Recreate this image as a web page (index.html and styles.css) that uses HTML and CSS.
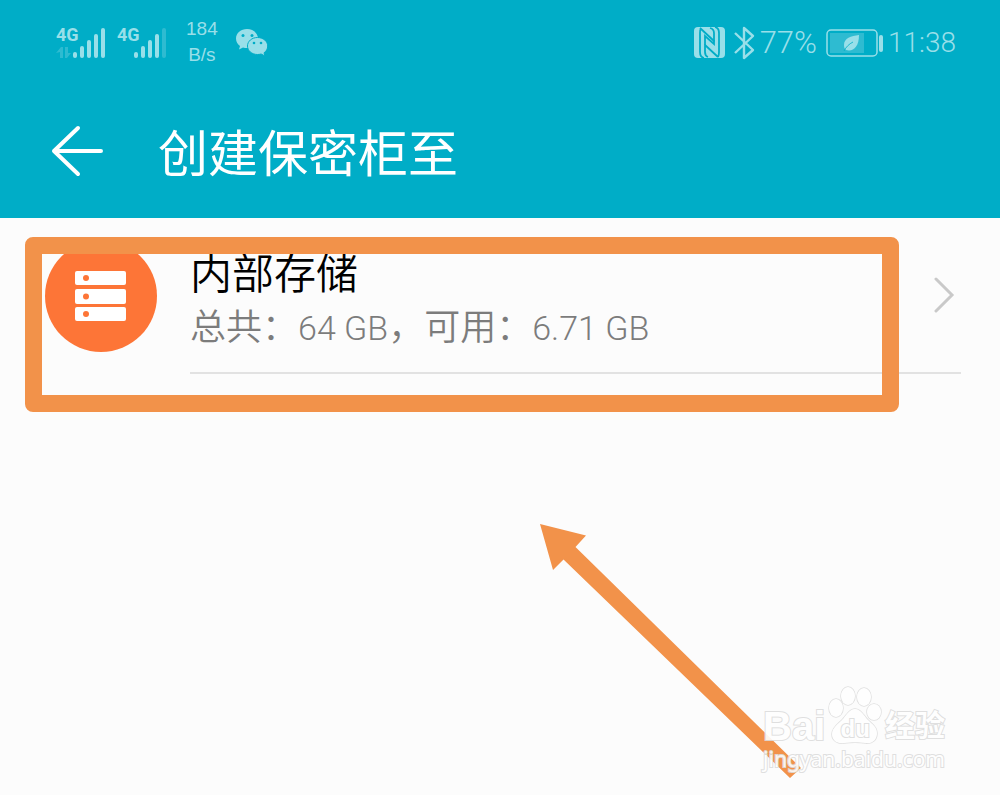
FILE: index.html
```html
<!DOCTYPE html>
<html lang="zh-CN">
<head>
    <meta charset="UTF-8">
    <meta name="viewport" content="width=device-width, initial-scale=1.0">
    <title>创建保密柜至</title>
    <link rel="stylesheet" href="styles.css">
</head>
<body>
    <header class="header">
        <div class="status-bar">
            <div class="status-left">
                <div class="signal">
                    <span class="net">4G</span>
                    <svg width="50" height="34" viewBox="0 0 50 34" fill="currentColor">
                        <path opacity=".3" d="M0 28l5-6h2v11H4v-6zM9 22h3v6h3l-4 5H9z"/>
                        <rect x="17" y="27" width="4" height="6" rx="2"/>
                        <rect x="24" y="21" width="4" height="12" rx="2"/>
                        <rect x="31" y="15" width="4" height="18" rx="2"/>
                        <rect x="38" y="9" width="4" height="24" rx="2"/>
                        <rect x="45" y="3" width="4" height="30" rx="2"/>
                    </svg>
                </div>
                <div class="signal">
                    <span class="net">4G</span>
                    <svg width="50" height="34" viewBox="0 0 50 34" fill="currentColor">
                        <rect x="17" y="27" width="4" height="6" rx="2"/>
                        <rect x="24" y="21" width="4" height="12" rx="2"/>
                        <rect x="31" y="15" width="4" height="18" rx="2"/>
                        <rect x="38" y="9" width="4" height="24" rx="2"/>
                        <rect x="45" y="3" width="4" height="30" rx="2" opacity=".3"/>
                    </svg>
                </div>
                <div class="speed"><span>184</span><span>B/s</span></div>
                <svg width="32" height="28" viewBox="0 0 32 28">
                    <path fill="currentColor" d="M11 1C5 1 0 5 0 10.500c0 3 1.500 5.500 4 7.500l-1 3.500 4-2c1.300.4 2.700.6 4 .6 6 0 11-4.300 11-9.600S17 1 11 1z"/>
                    <path fill="currentColor" stroke="#00adc7" stroke-width="1" d="M21.500 9.500c-5.600 0-10 3.700-10 8.500s4.400 8.500 10 8.500c1.300 0 2.500-.2 3.600-.5l3.900 2-1-3.200c2.400-1.600 3.700-4 3.700-6.800 0-4.800-4.600-8.500-10.200-8.500z"/>
                    <g fill="#00adc7"><circle cx="7" cy="7.500" r="1.500"/><circle cx="16" cy="7.500" r="1.500"/><circle cx="18" cy="15" r="1.300"/><circle cx="25" cy="15" r="1.300"/></g>
                </svg>
            </div>
            <div class="status-right">
                <svg width="31" height="32" viewBox="0 0 31 32">
                    <rect width="31" height="31" rx="4" fill="currentColor"/>
                    <path fill="none" stroke="#00adc7" stroke-width="1.800" stroke-linejoin="round" d="M7 1Q6 3 6 6V25Q6 30 10 31M6 1L20 14V6Q20 2 16 1M24 30Q25 28 25 25V6Q25 1 21 0M24 30L11 18V25Q11 29 14 30"/>
                    <path fill="none" stroke="#00adc7" stroke-width="1.800" d="M11 18V9l9 8v-4"/>
                </svg>
                <svg class="bluetooth" width="22" height="34" viewBox="0 0 22 34" fill="none" stroke="currentColor" stroke-width="2.400" stroke-linejoin="round">
                    <path d="M1 7l18 17-9 8V2l9 8L1 27"/>
                </svg>
                <span class="percent">77%</span>
                <svg width="58" height="28" viewBox="0 0 58 28">
                    <rect x="1" y="1" width="50" height="26" rx="4" fill="none" stroke="currentColor" stroke-width="1.500"/>
                    <rect x="4" y="4" width="34" height="20" fill="currentColor" opacity=".3"/>
                    <rect x="53" y="6" width="4" height="17" rx="2" fill="currentColor"/>
                    <path fill="currentColor" d="M33 6c-8 1-15 3-15 10 0 2 .5 4 2 5 7 2 13-3 13-15z"/>
                    <path fill="none" stroke="#00adc7" stroke-width=".8" d="M18 22c2-4 5-7 9-9"/>
                </svg>
                <time class="clock">11:38</time>
            </div>
        </div>
        <div class="title-bar">
            <button class="back" type="button" aria-label="返回">
                <svg width="52" height="52" viewBox="0 0 52 52" fill="none" stroke="currentColor" stroke-width="4" stroke-linecap="round" stroke-linejoin="round">
                    <path d="M27 3L3 26l24 23M3 26h47"/>
                </svg>
            </button>
            <h1>创建保密柜至</h1>
        </div>
    </header>

    <main class="content">
        <a class="storage" href="#">
            <svg width="112" height="112" viewBox="0 0 112 112">
                <circle cx="56" cy="56" r="56" fill="#fd7537"/>
                <g fill="#fff">
                    <rect x="30" y="31" width="51" height="14" rx="2"/>
                    <rect x="30" y="49" width="51" height="15" rx="2"/>
                    <rect x="30" y="67" width="51" height="14" rx="2"/>
                </g>
                <g fill="#fd7537">
                    <circle cx="41" cy="38" r="3"/>
                    <circle cx="41" cy="56.500" r="3"/>
                    <circle cx="41" cy="74" r="3"/>
                </g>
            </svg>
            <div class="storage-body">
                <div class="storage-text">
                    <h2>内部存储</h2>
                    <p>总共：<span class="size">64 GB</span>，可用：<span class="size">6.71 GB</span></p>
                </div>
                <svg width="22" height="36" viewBox="0 0 22 36" fill="none" stroke="#c9c9c9" stroke-width="3" stroke-linecap="round">
                    <path d="M3 2l16 16L3 34"/>
                </svg>
            </div>
        </a>
        <div class="highlight"></div>
    </main>

    <svg class="arrow" width="262" height="256" viewBox="0 0 262 256">
        <path fill="#f2924a" d="M0 0L46 11.500 35.500 23 261 244l-11 10L23.500 35.500 13 46z"/>
    </svg>

    <div class="watermark">
        <div class="brand">
            <span class="bai">Bai</span>
            <span class="paw">
                <svg width="54" height="60" viewBox="0 0 54 60" fill="#fff" stroke="#dcdcdc" stroke-width="1.500">
                    <ellipse cx="8" cy="23" rx="7" ry="9"/>
                    <ellipse cx="20" cy="11" rx="7" ry="9"/>
                    <ellipse cx="36" cy="12" rx="7" ry="9"/>
                    <ellipse cx="46" cy="27" rx="7" ry="8"/>
                    <path d="M27 24c-6 0-9 7-13 11S4 43 4 49c0 7 6 10 12 9 8-1 14-1 22 0 6 1 11-3 11-10 0-6-5-9-9-13s-7-11-13-11z"/>
                </svg>
                <span class="du">du</span>
            </span>
            <span class="jingyan">经验</span>
        </div>
        <div class="site">jingyan.baidu.com</div>
    </div>
</body>
</html>
```

FILE: styles.css
```css
* {
    box-sizing: border-box;
}
body {
    position: relative;
    margin: 0;
    min-height: 100vh;
    background: #fcfcfc;
    color: #000;
    font-family: Roboto, "Noto Sans CJK SC", sans-serif;
    font-weight: 300;
    overflow: hidden;
}
h1, h2, p {
    margin: 0;
    font-weight: inherit;
}
svg {
    display: block;
    flex: none;
}

/* header */
.header {
    background: #00adc7;
    color: #fff;
}
.status-bar {
    display: flex;
    justify-content: space-between;
    align-items: center;
    height: 86px;
    padding: 0 44px 0 56px;
    color: #99dfe9;
}
.status-left, .status-right {
    display: flex;
    align-items: center;
}
.status-left {
    padding-bottom: 2px;
}
.signal {
    position: relative;
    margin-right: 11px;
}
.net {
    position: absolute;
    top: 1px;
    left: 0;
    font-size: 18px;
    font-weight: 700;
    line-height: 18px;
    font-family: "Liberation Sans Narrow", Roboto, sans-serif;
}
.speed {
    display: flex;
    flex-direction: column;
    align-items: center;
    margin: 0 18px 0 8px;
    font-size: 19px;
    line-height: 26px;
    font-family: "Liberation Sans", sans-serif;
}
.bluetooth {
    margin-left: 9px;
}
.percent {
    margin: 0 9px 0 4px;
    font-size: 31px;
    line-height: 36px;
}
.clock {
    margin-left: 4px;
    font-size: 28px;
    line-height: 36px;
}
.title-bar {
    display: flex;
    align-items: center;
    height: 132px;
    padding: 0 51px 2px;
}
.back {
    padding: 0;
    border: none;
    background: none;
    color: #fff;
    cursor: pointer;
}
h1 {
    margin-left: 55px;
    padding-top: 8px;
    font-size: 50px;
    font-weight: 400;
    line-height: 60px;
}

/* storage list */
.content {
    position: relative;
}
.storage {
    display: flex;
    align-items: center;
    padding: 0 39px 0 45px;
    color: #000;
    text-decoration: none;
}
.storage-body {
    display: flex;
    flex: 1;
    align-items: center;
    justify-content: space-between;
    margin-left: 33px;
    padding-right: 6px;
    height: 156px;
    border-bottom: 2px solid #e2e2e2;
}
.storage-text {
    padding-top: 9px;
}
h2 {
    font-size: 42px;
    font-weight: 350;
    line-height: 56px;
}
.storage-text p {
    color: #7c7c7c;
    font-size: 36px;
    font-weight: 350;
    line-height: 50px;
}
.size {
    font-size: 34px;
    font-weight: 300;
}

/* marks drawn over the screen */
.highlight {
    position: absolute;
    top: 19px;
    left: 25px;
    right: 101px;
    height: 175px;
    border: 17px solid #f2924a;
    border-radius: 8px;
}
.arrow {
    position: absolute;
    top: 524px;
    left: 540px;
}
.watermark {
    position: absolute;
    right: 55px;
    bottom: 22px;
    color: #fff;
    font-family: "Liberation Sans", "Noto Sans CJK SC", sans-serif;
    font-weight: 700;
    -webkit-text-stroke: 2px #dcdcdc;
    paint-order: stroke fill;
    opacity: 0.9;
}
.brand {
    display: flex;
    align-items: flex-end;
    justify-content: space-between;
}
.bai {
    font-size: 40px;
    line-height: 38px;
}
.paw {
    position: relative;
}
.du {
    position: absolute;
    left: 0;
    right: 0;
    bottom: 2px;
    text-align: center;
    font-size: 24px;
    line-height: 28px;
}
.jingyan {
    font-size: 30px;
    line-height: 38px;
}
.site {
    font-size: 21px;
    line-height: 28px;
    font-family: "Noto Sans", sans-serif;
    font-weight: 400;
}
```
